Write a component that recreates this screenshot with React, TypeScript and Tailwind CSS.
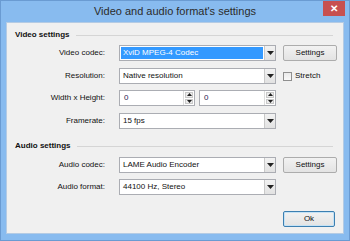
import React from "react";

const font = { fontFamily: '"Liberation Sans", Arial, sans-serif' };

const Arrow = () => (
  <svg width="7" height="4" viewBox="0 0 7 4">
    <path d="M0 0h7L3.5 4z" fill="#222" />
  </svg>
);

const DropButton = () => (
  <div className="w-[11px] h-full flex items-center justify-center border-l border-[#c9c9c9] bg-gradient-to-b from-[#f2f2f2] to-[#e2e2e2]">
    <Arrow />
  </div>
);

const Combo = ({ value, selected }: { value: string; selected?: boolean }) => (
  <div className="w-[157px] h-[16px] flex border border-[#abadb3] bg-white">
    <div className="flex-1 flex items-center px-[1px] min-w-0">
      {selected ? (
        <span className="flex-1 h-[12px] flex items-center pl-[2px] bg-[#3399ff] text-white">{value}</span>
      ) : (
        <span className="pl-[2px] text-[#111]">{value}</span>
      )}
    </div>
    <DropButton />
  </div>
);

const Spin = ({ w }: { w: string }) => (
  <div className={`${w} h-[16px] flex border border-[#abadb3] bg-white`}>
    <div className="flex-1 flex items-center pl-[4px] text-[#2a2050]">0</div>
    <div className="w-[11px] flex flex-col gap-[1px] p-[1px] border-l border-[#dcdcdc]">
      <div className="flex-1 flex items-center justify-center bg-[#ececec] border border-[#c9c9c9]">
        <svg width="5" height="3" viewBox="0 0 5 3"><path d="M2.5 0L5 3H0z" fill="#222" /></svg>
      </div>
      <div className="flex-1 flex items-center justify-center bg-[#ececec] border border-[#c9c9c9]">
        <svg width="5" height="3" viewBox="0 0 5 3"><path d="M0 0h5L2.5 3z" fill="#222" /></svg>
      </div>
    </div>
  </div>
);

const Button = ({ label }: { label: string }) => (
  <div className="w-[54px] h-[16px] flex items-center justify-center rounded-[2px] border border-[#acacac] bg-gradient-to-b from-[#f2f2f2] to-[#e3e3e3] text-[#111]">
    {label}
  </div>
);

const Label = ({ text }: { text: string }) => (
  <div className="w-[98px] text-right pr-0 text-[#111]">{text}</div>
);

const Heading = ({ text }: { text: string }) => (
  <div className="h-[10px] flex items-center gap-[6px] pl-[8px] pr-[10px]">
    <span className="font-bold text-[#111]">{text}</span>
    <div className="flex-1 h-px bg-[#d5d5d5]" />
  </div>
);

const Row = ({ label, children, className }: { label: string; children: React.ReactNode; className: string }) => (
  <div className={`flex items-center h-[16px] ${className}`}>
    <Label text={label} />
    <div className="ml-[14px] flex items-center">{children}</div>
  </div>
);

export default function App() {
  return (
    <div className="w-[350px] h-[241px] bg-[#88bbef] border border-[#6a9bd2] flex flex-col text-[8px]" style={font}>
      <div className="h-[21px] grid grid-cols-[1fr_auto_1fr]">
        <div />
        <div className="text-[11px] leading-[21px] text-[#2b2b2b]">Video and audio format's settings</div>
        <div className="flex justify-end items-start pr-[4px]">
          <div className="w-[22px] h-[15px] bg-[#c75050] flex items-center justify-center text-white font-bold text-[10px]">✕</div>
        </div>
      </div>
      <div className="mx-[5px] h-[212px] bg-[#f0f0f0] border border-[#b4cbe4] pt-[7px]">
        <Heading text="Video settings" />
        <Row label="Video codec:" className="mt-[5px]">
          <Combo value="XviD MPEG-4 Codec" selected />
          <div className="ml-[7px]"><Button label="Settings" /></div>
        </Row>
        <Row label="Resolution:" className="mt-[7px]">
          <Combo value="Native resolution" />
          <div className="ml-[7px] flex items-center gap-[3px]">
            <div className="w-[9px] h-[9px] border border-[#8f8f8f] bg-gradient-to-b from-[#eaeaea] to-[#f8f8f8]" />
            <span className="text-[#111]">Stretch</span>
          </div>
        </Row>
        <Row label="Width x Height:" className="mt-[6px]">
          <Spin w="w-[76px]" />
          <div className="ml-[4px]"><Spin w="w-[77px]" /></div>
        </Row>
        <Row label="Framerate:" className="mt-[7px]">
          <Combo value="15 fps" />
        </Row>
        <div className="mt-[12px]">
          <Heading text="Audio settings" />
        </div>
        <Row label="Audio codec:" className="mt-[6px]">
          <Combo value="LAME Audio Encoder" />
          <div className="ml-[7px]"><Button label="Settings" /></div>
        </Row>
        <Row label="Audio format:" className="mt-[6px]">
          <Combo value="44100 Hz, Stereo" />
        </Row>
        <div className="mt-[16px] flex justify-end pr-[8px]">
          <div className="w-[52px] h-[16px] flex items-center justify-center rounded-[2px] border border-[#3c7fb1] bg-gradient-to-b from-[#f2f2f2] to-[#e3e3e3] text-[#111] shadow-[inset_0_0_0_1px_#c5e2f5]">
            Ok
          </div>
        </div>
      </div>
    </div>
  );
}
